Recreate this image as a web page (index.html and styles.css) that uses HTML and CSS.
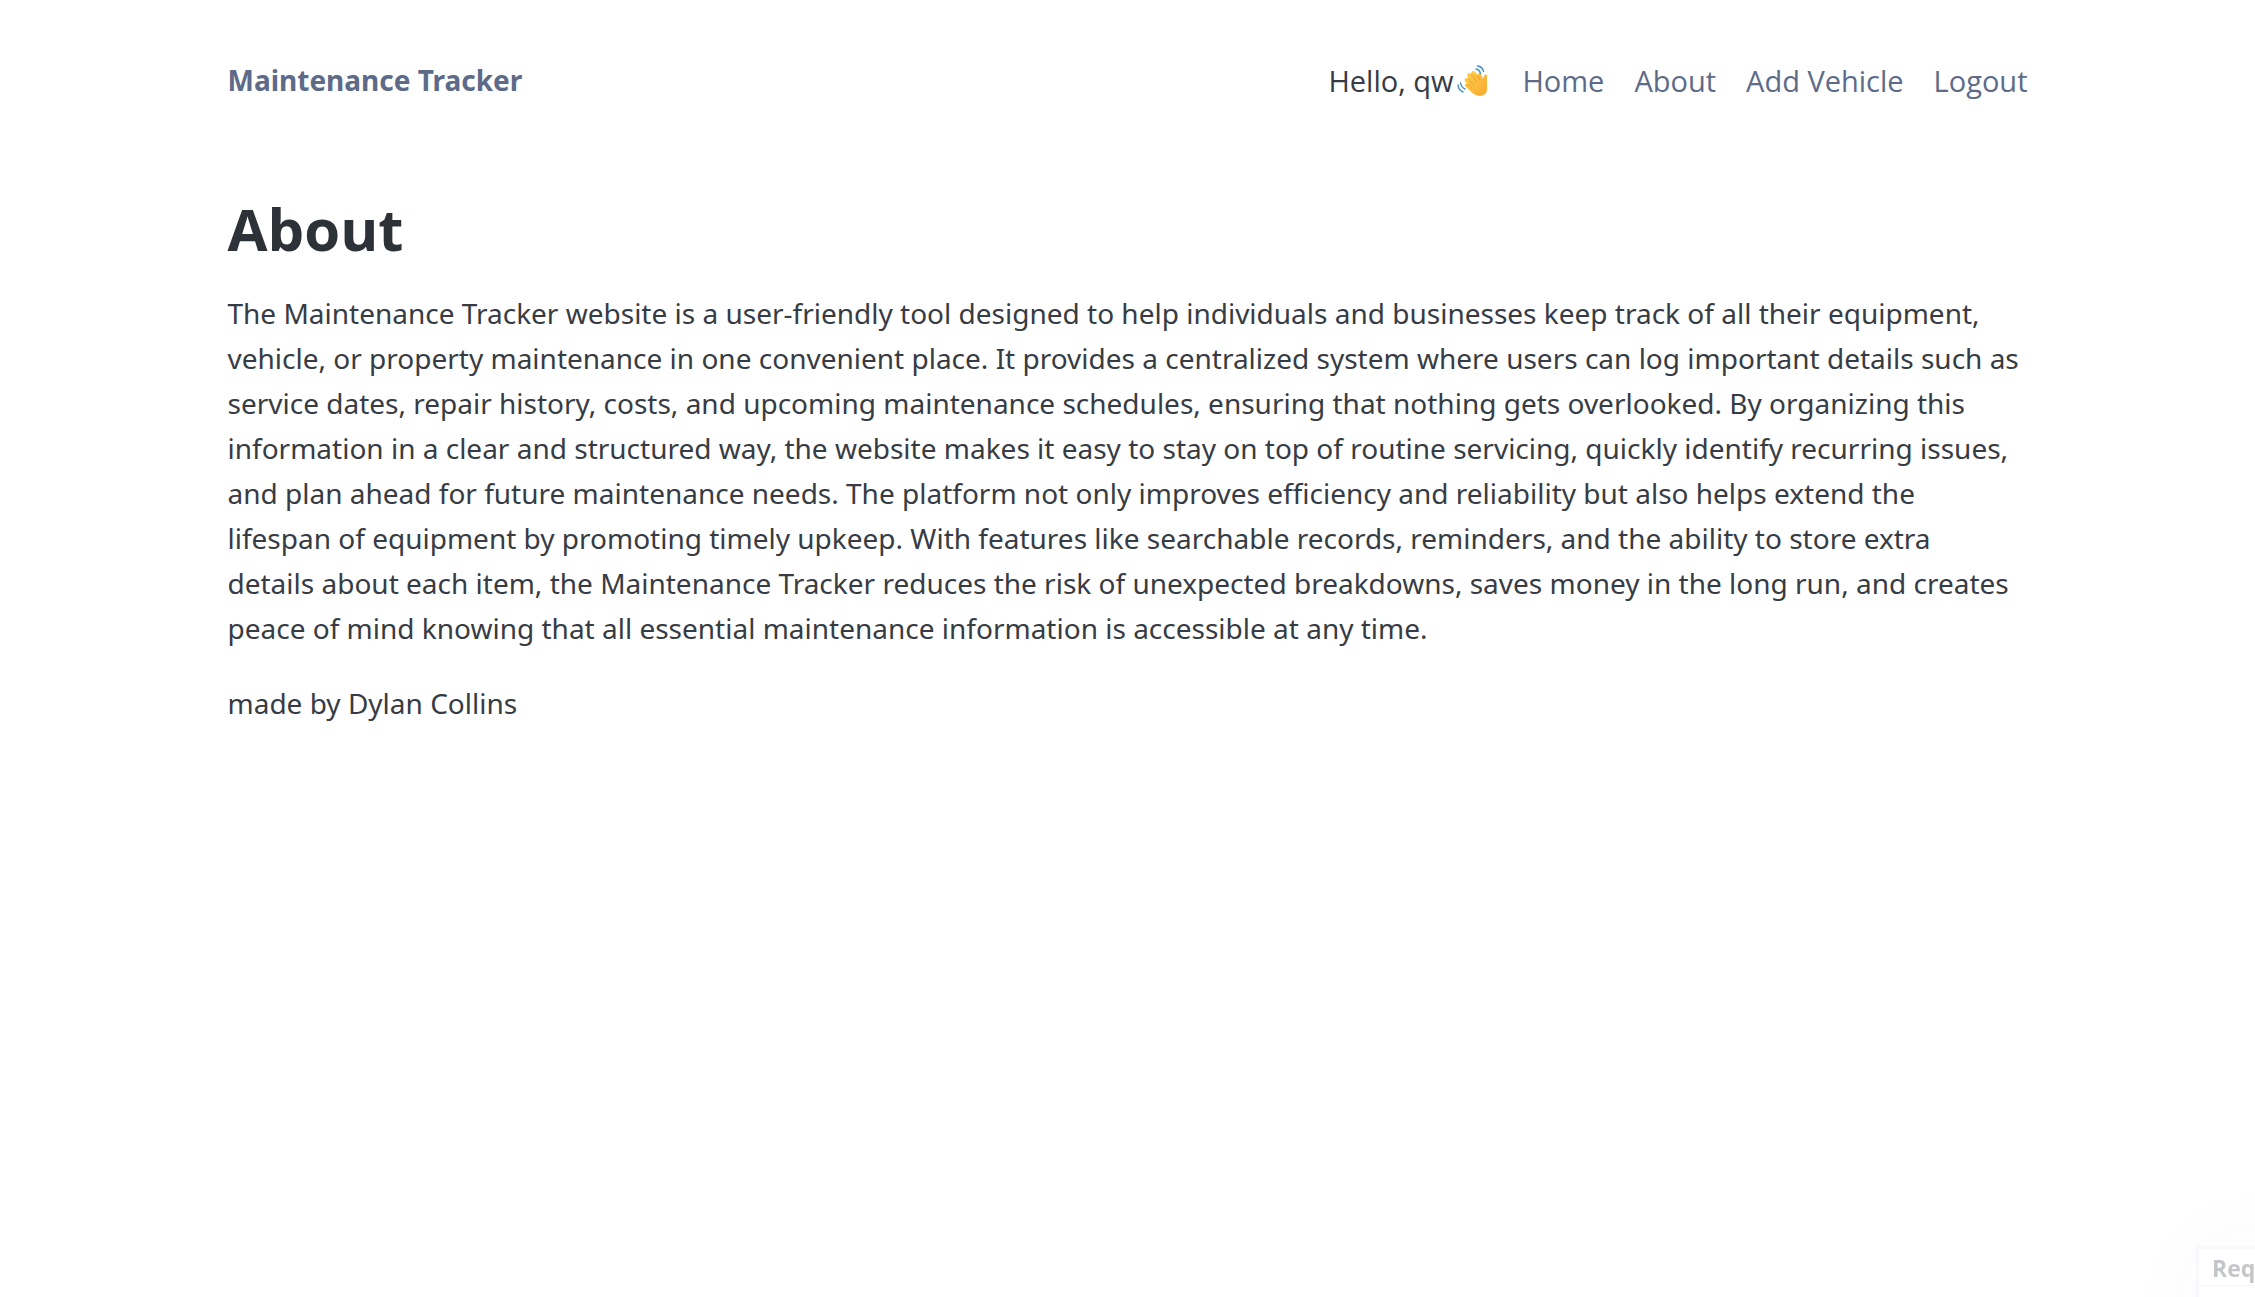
FILE: index.html
```html
<!DOCTYPE html>
<html lang="en">
<head>
<meta charset="utf-8">
<meta name="viewport" content="width=device-width, initial-scale=1">
<title>Maintenance Tracker</title>
<link rel="stylesheet" href="styles.css">
</head>
<body>
<header class="container site-header">
  <a class="brand" href="#">Maintenance Tracker</a>
  <nav class="site-nav">
    <span class="greeting">Hello, qw<svg class="wave" viewBox="0 0 30 32" role="img" aria-label="waving hand">
      <defs><linearGradient id="skin" x1="0" y1="0" x2="1" y2="1"><stop offset="0" stop-color="#ffd04a"/><stop offset="1" stop-color="#f9a830"/></linearGradient></defs>
      <path fill="url(#skin)" d="M8.500 17Q6.500 14.500 8.500 13.300Q10 12.500 11.500 14L10.500 11.500Q9.500 9 11.500 8.200Q13 7.500 14.500 9.500Q13.500 7 15.500 6.200Q17.500 5.500 19 8L20.500 10.500Q20.500 8 22.500 8Q24 8 24.500 10L26 14Q26.500 9.500 29 9.500L30 10V25Q29.500 29 25.500 30.500Q20 32 15.500 28L9 22Q7 20 8.500 19Q9.500 18.300 10.500 19Z"/>
      <path fill="none" stroke="#e8962e" stroke-width=".8" stroke-linecap="round" d="M11.500 14 16.500 20M14.500 9.500 19.500 17M20 10 23 15M10.500 19 14 22"/>
      <g fill="none" stroke="#3f8fc6" stroke-width="1.400" stroke-linecap="round">
        <path d="M19 4Q22.500 4.500 23.500 8.500M20.500 1Q25.500 1.500 26.500 6.500M3.500 18Q4 22 8 24M1 20Q1.500 25 6 27"/>
      </g>
    </svg></span>
    <a href="#">Home</a>
    <a href="#">About</a>
    <a href="#">Add Vehicle</a>
    <a href="#">Logout</a>
  </nav>
</header>
<main class="container">
  <h1>About</h1>
  <p>The Maintenance Tracker website is a user-friendly tool designed to help individuals and businesses keep track of all their equipment, vehicle, or property maintenance in one convenient place. It provides a centralized system where users can log important details such as service dates, repair history, costs, and upcoming maintenance schedules, ensuring that nothing gets overlooked. By organizing this information in a clear and structured way, the website makes it easy to stay on top of routine servicing, quickly identify recurring issues, and plan ahead for future maintenance needs. The platform not only improves efficiency and reliability but also helps extend the lifespan of equipment by promoting timely upkeep. With features like searchable records, reminders, and the ability to store extra details about each item, the Maintenance Tracker reduces the risk of unexpected breakdowns, saves money in the long run, and creates peace of mind knowing that all essential maintenance information is accessible at any time.</p>
  <p>made by Dylan Collins</p>
</main>
<div class="corner"><div class="popup"><div class="popup-title">Req</div></div></div>
</body>
</html>
```

FILE: styles.css
```css
* { box-sizing: border-box; }
body {
  margin: 0;
  background: #fff;
  color: #373c44;
  font: 28px/45px "Noto Sans", sans-serif;
}
.container {
  max-width: 1800px;
  margin: 0 auto;
}
.site-header {
  display: flex;
  justify-content: space-between;
  align-items: center;
  padding: 58px 0 62px;
}
a { color: #5d6b89; text-decoration: none; }
.brand { font-weight: 700; }
.site-nav {
  display: flex;
  gap: 30px;
  font-family: "Open Sans", sans-serif;
  font-size: 29px;
}
.greeting { display: flex; align-items: center; gap: 4px; margin-right: 5px; }
.wave { width: 30px; height: 32px; }
h1 {
  margin: 30px 0 28px;
  color: #2d3138;
  font-family: "Open Sans", sans-serif;
  font-size: 58px;
  line-height: 68px;
}
p { margin: 0 0 30px; padding-right: 6px; }
.corner {
  position: fixed;
  right: 0;
  bottom: 0;
  width: 160px;
  height: 130px;
  overflow: hidden;
  pointer-events: none;
}
.popup {
  margin: 79px 0 0 101px;
  width: 200px;
  height: 140px;
  border: 3px solid #f7f9fc;
  background: #fff;
  box-shadow: 0 0 90px rgba(100, 100, 110, .03);
}
.popup-title {
  padding: 2px 13px 0;
  border-bottom: 1px solid #f4f6f9;
  color: #c5c6ca;
  font-family: "Open Sans", sans-serif;
  font-size: 23px;
  font-weight: 700;
  line-height: 34px;
}
```
